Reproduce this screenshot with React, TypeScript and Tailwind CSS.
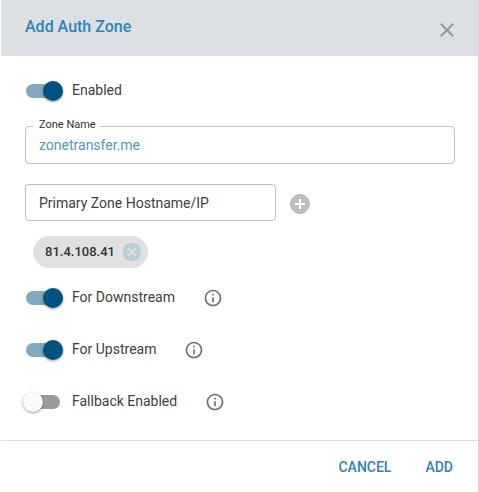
import { useState } from "react";
import { MdAddCircle, MdCancel, MdClose, MdOutlineInfo } from "react-icons/md";

type ToggleProps = {
  id: string;
  label: string;
  initial?: boolean;
  info?: boolean;
};

function ToggleRow({ id, label, initial = false, info = false }: ToggleProps) {
  const [on, setOn] = useState(initial);
  return (
    <div className="flex h-5 items-center">
      <label htmlFor={id} className="flex items-center gap-2">
        <span className="grid h-5 w-[41px] items-center">
          <input
            id={id}
            type="checkbox"
            role="switch"
            checked={on}
            onChange={(e) => setOn(e.target.checked)}
            className="peer col-start-1 row-start-1 ml-[3px] h-3.5 w-[34px] appearance-none rounded-full bg-[#9b9b9b] checked:bg-[#80a9be]"
          />
          <span className="pointer-events-none col-start-1 row-start-1 size-5 rounded-full bg-[#fafafa] shadow-[0_1px_3px_rgba(0,0,0,0.4)] peer-checked:ml-5 peer-checked:bg-[#00537f]" />
        </span>
        <span className="pb-0.5">{label}</span>
      </label>
      {info && (
        <button type="button" aria-label={`About ${label}`} className="ml-7 text-[#6f6f6f]">
          <MdOutlineInfo size={20} />
        </button>
      )}
    </div>
  );
}

export default function App() {
  const [zone, setZone] = useState("zonetransfer.me");
  const [host, setHost] = useState("");
  const [hosts, setHosts] = useState(["81.4.108.41"]);

  const addHost = () => {
    if (host.trim()) {
      setHosts([...hosts, host.trim()]);
      setHost("");
    }
  };

  return (
    <section
      role="dialog"
      aria-labelledby="dialog-title"
      className="flex min-h-screen flex-col border-l border-r border-l-white border-r-[#cfd3d6] bg-white font-[Roboto,'Liberation_Sans',sans-serif] text-sm text-[#404040]"
    >
      <header className="flex h-14 items-center justify-between bg-[#dce0e3] pr-[19px] pl-6">
        <h1 id="dialog-title" className="pb-0.5 text-base font-medium text-[#2b84b4]">
          Add Auth Zone
        </h1>
        <button type="button" aria-label="Close" className="pt-1 text-[#999999]">
          <MdClose size={24} />
        </button>
      </header>

      <form className="flex grow flex-col pt-[25px] pr-[23px] pl-6" onSubmit={(e) => e.preventDefault()}>
        <div className="-ml-0.5">
          <ToggleRow id="enabled" label="Enabled" initial />
        </div>

        <div className="relative mt-[25px]">
          <label htmlFor="zone" className="absolute -top-[7px] left-2 bg-white pr-1 pl-1.5 text-[11px] leading-3 text-[#333333]">
            Zone Name
          </label>
          <input
            id="zone"
            value={zone}
            onChange={(e) => setZone(e.target.value)}
            className="h-[38px] w-full rounded border border-[#bfbfbf] px-[13px] text-[#4b9ac3] outline-none"
          />
        </div>

        <div className="mt-5 flex items-center gap-3">
          <input
            aria-label="Primary Zone Hostname/IP"
            placeholder="Primary Zone Hostname/IP"
            value={host}
            onChange={(e) => setHost(e.target.value)}
            className="h-[37px] w-[251px] rounded border border-[#bfbfbf] px-[13px] outline-none placeholder:text-[#404040]"
          />
          <button type="button" aria-label="Add host" onClick={addHost} className="pt-0.5 text-[#bdbdbd]">
            <MdAddCircle size={24} />
          </button>
        </div>

        <ul className="mt-[15px] flex flex-wrap gap-2 pl-2">
          {hosts.map((h) => (
            <li
              key={h}
              className="flex h-8 items-center gap-1.5 rounded-full bg-[#e0e0e0] pr-[5px] pl-3 text-[13px] font-medium text-[#333333]"
            >
              {h}
              <button
                type="button"
                aria-label={`Remove ${h}`}
                onClick={() => setHosts(hosts.filter((x) => x !== h))}
                className="text-[#b9ced9]"
              >
                <MdCancel size={22} />
              </button>
            </li>
          ))}
        </ul>

        <div className="mt-5 -ml-0.5 flex flex-col gap-8 pb-7">
          <ToggleRow id="downstream" label="For Downstream" initial info />
          <ToggleRow id="upstream" label="For Upstream" initial info />
          <ToggleRow id="fallback" label="Fallback Enabled" info />
        </div>
      </form>

      <footer className="flex h-[52px] items-center justify-end gap-0.5 border-t border-[#dddddd] pr-[9px] text-sm font-medium text-[#2b84b4]">
        <button type="button" className="h-9 px-4">CANCEL</button>
        <button type="button" className="h-9 px-4">ADD</button>
      </footer>
    </section>
  );
}
